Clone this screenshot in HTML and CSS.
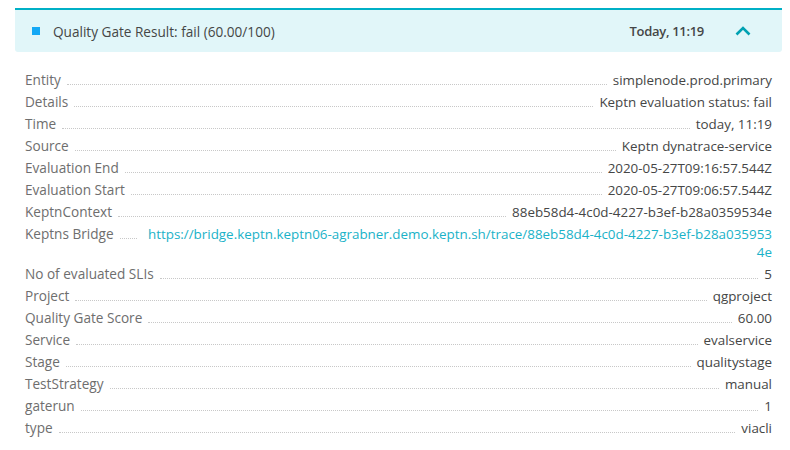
FILE: index.html
```html
<!DOCTYPE html>
<html>
<head>
<meta charset="utf-8">
<link rel="stylesheet" href="styles.css">
</head>
<body>
<div class="card">
  <div class="header">
    <span class="marker"></span>
    <span class="title">Quality Gate Result: fail (60.00/100)</span>
    <span class="time">Today, 11:19</span>
    <svg class="chevron" width="16" height="10" viewBox="0 0 16 10"><path d="M1.5 8.5 L8 2 L14.5 8.5" fill="none" stroke="#00a1b2" stroke-width="2.6"/></svg>
  </div>
  <div class="props">
    <div class="row"><span class="label">Entity</span><span class="dots"></span><span class="value">simplenode.prod.primary</span></div>
    <div class="row"><span class="label">Details</span><span class="dots"></span><span class="value">Keptn evaluation status: fail</span></div>
    <div class="row"><span class="label">Time</span><span class="dots"></span><span class="value">today, 11:19</span></div>
    <div class="row"><span class="label">Source</span><span class="dots"></span><span class="value">Keptn dynatrace-service</span></div>
    <div class="row"><span class="label">Evaluation End</span><span class="dots"></span><span class="value">2020-05-27T09:16:57.544Z</span></div>
    <div class="row"><span class="label">Evaluation Start</span><span class="dots"></span><span class="value">2020-05-27T09:06:57.544Z</span></div>
    <div class="row"><span class="label">KeptnContext</span><span class="dots"></span><span class="value">88eb58d4-4c0d-4227-b3ef-b28a0359534e</span></div>
    <div class="row"><span class="label">Keptns Bridge</span><span class="dots"></span><a class="value link" href="#">https://bridge.keptn.keptn06-agrabner.demo.keptn.sh/trace/88eb58d4-4c0d-4227-b3ef-b28a0359534e</a></div>
    <div class="row"><span class="label">No of evaluated SLIs</span><span class="dots"></span><span class="value">5</span></div>
    <div class="row"><span class="label">Project</span><span class="dots"></span><span class="value">qgproject</span></div>
    <div class="row"><span class="label">Quality Gate Score</span><span class="dots"></span><span class="value">60.00</span></div>
    <div class="row"><span class="label">Service</span><span class="dots"></span><span class="value">evalservice</span></div>
    <div class="row"><span class="label">Stage</span><span class="dots"></span><span class="value">qualitystage</span></div>
    <div class="row"><span class="label">TestStrategy</span><span class="dots"></span><span class="value">manual</span></div>
    <div class="row"><span class="label">gaterun</span><span class="dots"></span><span class="value">1</span></div>
    <div class="row"><span class="label">type</span><span class="dots"></span><span class="value">viacli</span></div>
  </div>
</div>
</body>
</html>
```
FILE: styles.css
```css
html, body {
  margin: 0;
  padding: 0;
  background: #ffffff;
}
body {
  padding: 8px 8px 0 15px;
  font-family: "Open Sans", "DejaVu Sans", sans-serif;
  font-size: 13.6px;
  color: #454646;
}
.card {
  width: 767px;
}
.header {
  display: flex;
  align-items: center;
  height: 42px;
  border-top: 2px solid #00b0c6;
  background: #e1f6f9;
  border-radius: 0 0 3px 3px;
  padding: 0 31px 0 17px;
}
.marker {
  width: 8px;
  height: 8px;
  background: #14a8f5;
  flex: none;
  margin-right: 13px;
}
.title {
  flex: 1;
  color: #454646;
}
.time {
  font-weight: 600;
  font-size: 13px;
  letter-spacing: -0.3px;
  color: #454646;
  margin-right: 31px;
}
.chevron {
  display: block;
  flex: none;
}
.props {
  margin-top: 17px;
  padding: 0 10px;
}
.row {
  display: flex;
  align-items: flex-start;
  padding: 2px 0;
  line-height: 18px;
}
.label {
  flex: none;
  color: #6e6e6e;
}
.dots {
  flex: 1 1 auto;
  min-width: 17px;
  height: 13px;
  border-bottom: 1px dotted #c8c8c8;
  margin: 0 6px;
}
.value {
  flex: 0 1 auto;
  min-width: 0;
  text-align: right;
  word-break: break-all;
  font-size: 13.4px;
  color: #454646;
}
.link {
  color: #1ab2c8;
  text-decoration: none;
  margin-left: 4px;
}
```
